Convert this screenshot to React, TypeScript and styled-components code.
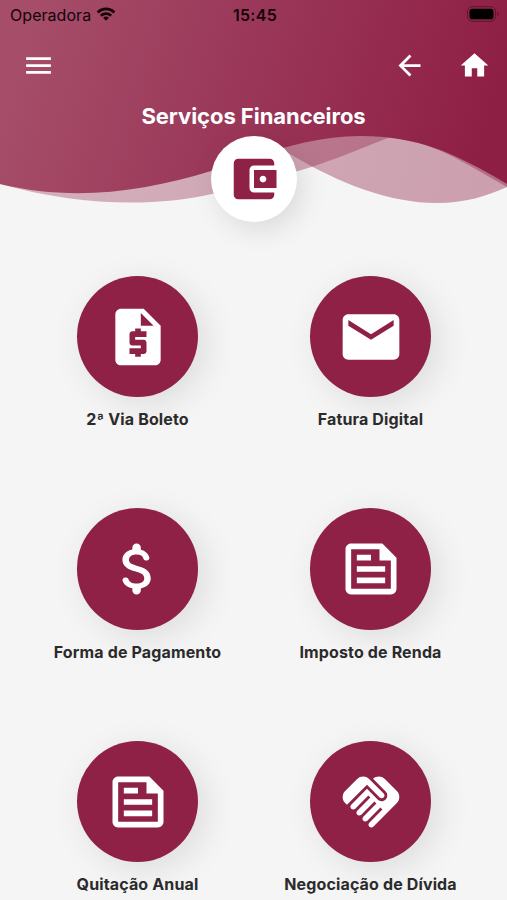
import React from "react";
import styled, { createGlobalStyle } from "styled-components";
import type { IconType } from "react-icons";
import {
  MdAccountBalanceWallet,
  MdArrowBack,
  MdEmail,
  MdHome,
  MdMenu,
  MdOutlineFeed,
} from "react-icons/md";

const wine = "#8e2145";

const GlobalStyle = createGlobalStyle`
  *, *::before, *::after { box-sizing: border-box; }
  body {
    margin: 0;
    background: #f5f5f5;
    font-family: Inter, "Liberation Sans", sans-serif;
    -webkit-font-smoothing: antialiased;
  }
`;

const Screen = styled.div`
  display: flex;
  flex-direction: column;
  width: 507px;
  height: 900px;
  margin: 0 auto;
  overflow: hidden;
  background: #f5f5f5;
`;

const Header = styled.header`
  position: relative;
  isolation: isolate;
  display: flex;
  flex-direction: column;
  align-items: center;
  flex: none;
  height: 222px;
`;

const Waves = styled.svg`
  position: absolute;
  inset: 0;
  z-index: -1;
  width: 100%;
  height: 100%;
`;

const StatusBar = styled.div`
  display: grid;
  grid-template-columns: 1fr auto 1fr;
  align-items: center;
  width: 100%;
  height: 30px;
  padding: 0 7px 0 10px;
  color: #14040a;
`;

const Carrier = styled.div`
  display: flex;
  align-items: center;
  gap: 5px;
  font-size: 16px;
  letter-spacing: 0.05px;

  svg {
    margin-top: -2px;
  }
`;

const Clock = styled.time`
  font-size: 16px;
  font-weight: 600;
  letter-spacing: 0.3px;
`;

const Battery = styled.svg`
  justify-self: end;
  width: 34px;
  height: 16px;
  margin-top: -2px;
`;

const NavBar = styled.nav`
  display: flex;
  align-items: center;
  width: 100%;
  height: 71px;
  padding: 0 16px 0 22px;
`;

const IconButton = styled.button<{ $push?: boolean }>`
  display: flex;
  margin: 0 ${(p) => (p.$push ? "32px" : "0")} 0 ${(p) => (p.$push ? "auto" : "0")};
  padding: 0;
  border: 0;
  background: none;
  color: #fff;
  font-size: 33px;
`;

const Title = styled.h1`
  margin: 0;
  height: 35px;
  color: #fff;
  font-size: 22px;
  font-weight: 700;
  line-height: 31px;
  letter-spacing: -0.05px;
  white-space: nowrap;
`;

const Badge = styled.div`
  display: flex;
  align-items: center;
  justify-content: center;
  flex: none;
  width: 86px;
  height: 86px;
  border-radius: 50%;
  background: #fff;
  color: ${wine};
  font-size: 54px;
  box-shadow: 6px 8px 28px rgba(0, 0, 0, 0.11);
`;

const Services = styled.main`
  display: grid;
  grid-template-columns: repeat(2, 233px);
  grid-auto-rows: 232.5px;
  justify-content: center;
  padding: 53.8px 0 0 1px;
`;

const Service = styled.a`
  display: flex;
  flex-direction: column;
  align-items: center;
  color: #2b2b2b;
  text-decoration: none;
`;

const Disc = styled.span`
  display: flex;
  align-items: center;
  justify-content: center;
  width: 121.5px;
  height: 121.5px;
  border-radius: 50%;
  background: ${wine};
  color: #fff;
  font-size: 68px;
  box-shadow: 8px 7px 34px rgba(0, 0, 0, 0.1);
`;

const Label = styled.span`
  margin-top: 11.2px;
  font-size: 16px;
  font-weight: 700;
  line-height: 22px;
  letter-spacing: 0.14px;
  white-space: nowrap;
`;

const Glyph = styled.svg.attrs({ viewBox: "0 0 24 24", fill: "currentColor" })`
  width: 1em;
  height: 1em;
`;

const RoundedMoney = () => (
  <Glyph>
    <path d="M11.8 10.9c-2.27-.59-3-1.2-3-2.15 0-1.09 1.01-1.85 2.7-1.85 1.42 0 2.13.54 2.39 1.4.12.4.45.7.87.7h.3c.66 0 1.13-.65.9-1.27-.42-1.18-1.4-2.16-2.96-2.54V4.5c0-.83-.67-1.5-1.5-1.5S10 3.67 10 4.5v.66c-1.94.42-3.5 1.68-3.5 3.61 0 2.31 1.91 3.46 4.7 4.13 2.5.6 3 1.48 3 2.41 0 .69-.49 1.79-2.7 1.79-1.65 0-2.5-.59-2.83-1.43-.15-.39-.49-.67-.9-.67h-.28c-.67 0-1.14.68-.89 1.3.57 1.39 1.9 2.21 3.4 2.53v.67c0 .83.67 1.5 1.5 1.5s1.5-.67 1.5-1.5v-.65c1.95-.37 3.5-1.5 3.5-3.55 0-2.84-2.43-3.81-4.7-4.4z" />
  </Glyph>
);

const Invoice = () => (
  <Glyph>
    <path
      fillRule="evenodd"
      d="M14 2H6c-1.1 0-2 .9-2 2v16c0 1.1.9 2 2 2h12c1.1 0 2-.9 2-2V8l-6-6zM13 3.5L17.5 8H13V3.5zM15 12h-4v1h3c.55 0 1 .45 1 1v3c0 .55-.45 1-1 1h-1v1h-2v-1H9v-2h4v-1h-3c-.55 0-1-.45-1-1v-3c0-.55.45-1 1-1h1V9h2v1h2v2z"
    />
  </Glyph>
);

const Handshake = () => (
  <Glyph>
    <path d="M16.48 10.41c-.39.39-1.04.39-1.43 0l-4.47-4.46-7.05 7.04-.66-.63c-1.17-1.17-1.17-3.07 0-4.24l4.24-4.24c1.17-1.17 3.07-1.17 4.24 0L16.48 9c.39.39.39 1.02 0 1.41z" />
    <path d="M17.18 8.29c.78.78.78 2.05 0 2.83-1.27 1.27-2.61.22-2.83 0l-3.76-3.76-5.57 5.57c-.39.39-.39 1.02 0 1.41.39.39 1.02.39 1.42 0l4.62-4.62.71.71-4.62 4.62c-.39.39-.39 1.02 0 1.41.39.39 1.02.39 1.42 0l4.62-4.62.71.71-4.62 4.62c-.39.39-.39 1.02 0 1.41.39.39 1.02.39 1.41 0l4.62-4.62.71.71-4.62 4.62c-.39.39-.39 1.02 0 1.41.39.39 1.02.39 1.41 0l8.32-8.34c1.17-1.17 1.17-3.07 0-4.24l-4.24-4.24c-1.15-1.15-3.01-1.17-4.18-.06l4.47 4.47z" />
  </Glyph>
);

const Wifi = () => (
  <svg width="20" height="15" viewBox="0 0 20 15" fill="currentColor">
    <path d="M10 3.3c2.75 0 5.25 1.1 7.1 2.95.15.15.4.15.55 0l1.4-1.4c.15-.15.15-.4 0-.55A12.9 12.9 0 0 0 10 .6 12.9 12.9 0 0 0 .95 4.3c-.15.15-.15.4 0 .55l1.4 1.4c.15.15.4.15.55 0A10 10 0 0 1 10 3.3z" />
    <path d="M10 7.9c1.5 0 2.85.57 3.9 1.5.15.15.4.15.55 0l1.4-1.4c.15-.15.15-.4 0-.55A8.6 8.6 0 0 0 10 5.2a8.6 8.6 0 0 0-5.85 2.25c-.15.15-.15.4 0 .55l1.4 1.4c.15.15.4.15.55 0A5.8 5.8 0 0 1 10 7.9z" />
    <path d="M12.65 11.1c.15-.15.15-.4 0-.55a4.2 4.2 0 0 0-5.3 0c-.15.15-.15.4 0 .55l2.4 2.4c.15.15.35.15.5 0z" />
  </svg>
);

const services: { label: string; icon: IconType | React.FC }[] = [
  { label: "2ª Via Boleto", icon: Invoice },
  { label: "Fatura Digital", icon: MdEmail },
  { label: "Forma de Pagamento", icon: RoundedMoney },
  { label: "Imposto de Renda", icon: MdOutlineFeed },
  { label: "Quitação Anual", icon: MdOutlineFeed },
  { label: "Negociação de Dívida", icon: Handshake },
];

export default function App() {
  return (
    <Screen>
      <GlobalStyle />
      <Header>
        <Waves viewBox="0 0 507 222" preserveAspectRatio="none" aria-hidden>
          <defs>
            <linearGradient id="wine" gradientUnits="userSpaceOnUse" x1="30" y1="30" x2="480" y2="160">
              <stop offset="0" stopColor="#a54d69" />
              <stop offset="0.45" stopColor="#9b3859" />
              <stop offset="1" stopColor="#8e1f44" />
            </linearGradient>
          </defs>
          <path
            fill="url(#wine)"
            fillOpacity="0.4"
            d="M0 0V184C75 205 150 208 212 194C245 187 275 177 298 171S360 149 388 138C425 137 465 163 507 187V0Z"
          />
          <path
            fill="url(#wine)"
            fillOpacity="0.4"
            d="M0 0V100H190C240 120 262 139 290 154C340 184 390 203 437 203C465 203 487 196 507 187V0Z"
          />
          <path
            fill="url(#wine)"
            d="M0 0V184C70 201 140 193 211 171C255 157 307 136 360 136C418 136 455 153 507 184V0Z"
          />
        </Waves>
        <StatusBar>
          <Carrier>
            Operadora
            <Wifi />
          </Carrier>
          <Clock>15:45</Clock>
          <Battery viewBox="0 0 34 16" aria-hidden>
            <rect x="1.5" y="0.7" width="28" height="14.6" rx="4.5" fill="none" stroke="#5c1730" />
            <rect x="3.5" y="2.8" width="24" height="10.4" rx="2.8" fill="#000" />
            <path d="M31.3 5.5c1.7.8 1.7 4.2 0 5z" fill="#5c1730" />
          </Battery>
        </StatusBar>
        <NavBar>
          <IconButton aria-label="Menu">
            <MdMenu />
          </IconButton>
          <IconButton $push aria-label="Voltar">
            <MdArrowBack />
          </IconButton>
          <IconButton aria-label="Início">
            <MdHome />
          </IconButton>
        </NavBar>
        <Title>Serviços Financeiros</Title>
        <Badge>
          <MdAccountBalanceWallet />
        </Badge>
      </Header>
      <Services>
        {services.map(({ label, icon: Icon }) => (
          <Service key={label}>
            <Disc>
              <Icon />
            </Disc>
            <Label>{label}</Label>
          </Service>
        ))}
      </Services>
    </Screen>
  );
}
